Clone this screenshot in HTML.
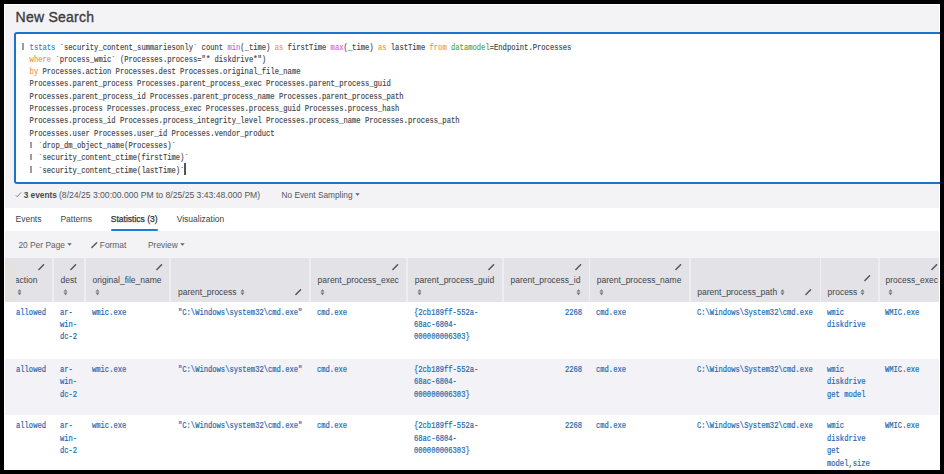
<!DOCTYPE html><html><head><meta charset="utf-8"><style>
html,body{margin:0;padding:0;}
body{width:944px;height:474px;background:#000;position:relative;overflow:hidden;font-family:"Liberation Sans",sans-serif;}
.a{position:absolute;white-space:pre;}
#frame{position:absolute;left:4px;top:4px;width:936px;height:466px;background:#fff;overflow:hidden;}
#title{left:15.6px;top:8.9px;font-size:14px;letter-spacing:0.24px;font-weight:400;-webkit-text-stroke:0.35px #3d3d3f;color:#3d3d3f;}
#box{position:absolute;left:14px;top:32px;width:960px;height:148px;border:2px solid #1b74cc;border-radius:3px;background:#fff;}
#code{position:absolute;left:4.9px;top:7.5px;font-family:"Liberation Mono",monospace;font-size:8.3px;line-height:12.32px;color:#404347;-webkit-text-stroke-width:0.15px;white-space:pre;transform:scaleX(0.8635);transform-origin:0 0;}
.cm{color:#2e80e4}.kw{color:#f29642}.fn{color:#d95ad9}.ar{color:#5e9f3a}.pp{color:transparent}
.st{font-size:8.3px;color:#51565c;}
.tab{font-size:8.5px;color:#3c444d;}
.tb{font-size:8.4px;color:#5a6066;}
.hcol{position:absolute;top:258px;height:44px;background:#e3e3e7;}
.hd{position:absolute;font-size:8.5px;color:#3c444d;white-space:pre;}
.cell{position:absolute;font-family:"Liberation Mono",monospace;font-size:8.5px;line-height:12.4px;color:#1d6ab2;-webkit-text-stroke-width:0.2px;white-space:pre;transform:scaleX(0.8402);transform-origin:0 0;}
.ic{position:absolute;}
</style></head><body>
<div id="frame"></div>
<div class="a" style="left:5px;top:5px;width:934px;height:203px;background:#f3f2f5"></div>
<div id="title" class="a">New Search</div>
<div class="a" style="left:22.2px;top:43.2px;width:1.5px;height:6.4px;background:#9a9da1;z-index:3"></div>
<div class="a" style="left:30.4px;top:141.8px;width:1.5px;height:6.4px;background:#9a9da1;z-index:3"></div>
<div class="a" style="left:30.4px;top:154.1px;width:1.5px;height:6.4px;background:#9a9da1;z-index:3"></div>
<div class="a" style="left:30.4px;top:166.4px;width:1.5px;height:6.4px;background:#9a9da1;z-index:3"></div>
<div class="a" style="left:184.3px;top:162.7px;width:1.8px;height:12px;background:#555;z-index:3"></div>
<div id="box"><div id="code"><span class="pp">|</span> <span class="cm">tstats</span> `security_content_summariesonly` count <span class="fn">min</span>(_time) <span class="kw">as</span> firstTime <span class="fn">max</span>(_time) <span class="kw">as</span> lastTime <span class="kw">from</span> <span class="ar">datamodel</span>=Endpoint.Processes
  <span class="kw">where</span> `process_wmic` (Processes.process="* diskdrive*")
  <span class="kw">by</span> Processes.action Processes.dest Processes.original_file_name
  Processes.parent_process Processes.parent_process_exec Processes.parent_process_guid
  Processes.parent_process_id Processes.parent_process_name Processes.parent_process_path
  Processes.process Processes.process_exec Processes.process_guid Processes.process_hash
  Processes.process_id Processes.process_integrity_level Processes.process_name Processes.process_path
  Processes.user Processes.user_id Processes.vendor_product
  <span class="pp">|</span> `drop_dm_object_name(Processes)`
  <span class="pp">|</span> `security_content_ctime(firstTime)`
  <span class="pp">|</span> `security_content_ctime(lastTime)`</div></div>
<svg class="ic" style="left:15px;top:191px" width="7" height="7" viewBox="0 0 7 7"><path d="M1.1 4.6L2.2 5.7L5.8 1.7" stroke="#777c82" stroke-width="0.95" fill="none" stroke-linecap="round" stroke-linejoin="round"/></svg>
<div class="a st" style="left:23.7px;top:184.5px;height:20px;line-height:20px;"><span style="font-weight:700;color:#454a50">3 events</span></div>
<div class="a st" style="left:59px;top:184.5px;height:20px;line-height:20px;"><span style="font-size:8.6px">(8/24/25 3:00:00.000 PM to 8/25/25 3:43:48.000 PM)</span></div>
<div class="a st" style="left:281.5px;top:184.5px;height:20px;line-height:20px;">No Event Sampling</div>
<div class="a tab" style="left:15.5px;top:214px">Events</div>
<div class="a tab" style="left:60.4px;top:214px">Patterns</div>
<div class="a tab" style="left:110.8px;top:214px;-webkit-text-stroke-width:0.25px;color:#2f353b">Statistics (3)</div>
<div class="a tab" style="left:176.7px;top:214px">Visualization</div>
<div class="a" style="left:111px;top:229px;width:47px;height:2px;background:#1a7cdc;border-radius:1px"></div>
<div class="a" style="left:5px;top:231px;width:934px;height:27px;background:#f3f2f5"></div>
<div class="a tb" style="left:18.4px;top:239.6px">20 Per Page</div>
<div class="a tb" style="left:99.8px;top:239.6px">Format</div>
<div class="a tb" style="left:148px;top:239.6px">Preview</div>
<svg class="ic" style="left:66.8px;top:242.6px" width="5" height="3" viewBox="0 0 5 3"><path d="M0.3 0.2H4.7L2.5 2.8Z" fill="#5c6167"/></svg>
<svg class="ic" style="left:179.5px;top:242.5px" width="5" height="3" viewBox="0 0 5 3"><path d="M0.3 0.2H4.7L2.5 2.8Z" fill="#5c6167"/></svg>
<svg class="ic" style="left:355px;top:193px" width="5" height="3" viewBox="0 0 5 3"><path d="M0.3 0.2H4.7L2.5 2.8Z" fill="#5c6167"/></svg>
<svg class="ic" style="left:91px;top:241.7px" width="7" height="7" viewBox="0 0 7 7"><path d="M0.9 5.5L5.6 0.8" stroke="#555d66" stroke-width="1.5" stroke-linecap="round" fill="none"/></svg>
<div class="a" style="left:5px;top:258px;width:934px;height:44px;background:#eeeef1"></div>
<div class="hcol" style="left:16px;width:36px"></div>
<div class="hcol" style="left:54px;width:30px"></div>
<div class="hcol" style="left:86px;width:83px"></div>
<div class="hcol" style="left:171px;width:138px"></div>
<div class="hcol" style="left:310.5px;width:95.5px"></div>
<div class="hcol" style="left:407.5px;width:94.5px"></div>
<div class="hcol" style="left:503.5px;width:85.0px"></div>
<div class="hcol" style="left:590px;width:99px"></div>
<div class="hcol" style="left:690.5px;width:129.0px"></div>
<div class="hcol" style="left:821px;width:57px"></div>
<div class="hcol" style="left:879.5px;width:59.5px"></div>
<div class="hd" style="left:14.8px;top:275px">action</div>
<svg class="ic" style="left:38px;top:263.5px" width="7" height="7" viewBox="0 0 7 7"><path d="M0.9 5.5L5.6 0.8" stroke="#52565c" stroke-width="1.5" stroke-linecap="round" fill="none"/></svg>
<svg class="ic" style="left:17.3px;top:288.9px" width="5" height="7" viewBox="0 0 5 7"><path d="M0.7 2.5L0.7 3.9L4.3 3.9L4.3 2.5Z" fill="#72767c" opacity="0.35"/><path d="M0.6 2.6L2.5 0.2L4.4 2.6Z M0.6 3.8L2.5 6.2L4.4 3.8Z" fill="#72767c"/></svg>
<div class="hd" style="left:60.5px;top:275px">dest</div>
<svg class="ic" style="left:70px;top:263.5px" width="7" height="7" viewBox="0 0 7 7"><path d="M0.9 5.5L5.6 0.8" stroke="#52565c" stroke-width="1.5" stroke-linecap="round" fill="none"/></svg>
<svg class="ic" style="left:63.0px;top:288.9px" width="5" height="7" viewBox="0 0 5 7"><path d="M0.7 2.5L0.7 3.9L4.3 3.9L4.3 2.5Z" fill="#72767c" opacity="0.35"/><path d="M0.6 2.6L2.5 0.2L4.4 2.6Z M0.6 3.8L2.5 6.2L4.4 3.8Z" fill="#72767c"/></svg>
<div class="hd" style="left:92.5px;top:275px">original_file_name</div>
<svg class="ic" style="left:156px;top:263.5px" width="7" height="7" viewBox="0 0 7 7"><path d="M0.9 5.5L5.6 0.8" stroke="#52565c" stroke-width="1.5" stroke-linecap="round" fill="none"/></svg>
<svg class="ic" style="left:95.0px;top:288.9px" width="5" height="7" viewBox="0 0 5 7"><path d="M0.7 2.5L0.7 3.9L4.3 3.9L4.3 2.5Z" fill="#72767c" opacity="0.35"/><path d="M0.6 2.6L2.5 0.2L4.4 2.6Z M0.6 3.8L2.5 6.2L4.4 3.8Z" fill="#72767c"/></svg>
<div class="hd" style="left:178px;top:286.8px">parent_process</div>
<svg class="ic" style="left:239.7px;top:288.6px" width="5" height="7" viewBox="0 0 5 7"><path d="M0.7 2.5L0.7 3.9L4.3 3.9L4.3 2.5Z" fill="#72767c" opacity="0.35"/><path d="M0.6 2.6L2.5 0.2L4.4 2.6Z M0.6 3.8L2.5 6.2L4.4 3.8Z" fill="#72767c"/></svg>
<svg class="ic" style="left:294.8px;top:289px" width="7" height="7" viewBox="0 0 7 7"><path d="M0.9 5.5L5.6 0.8" stroke="#52565c" stroke-width="1.5" stroke-linecap="round" fill="none"/></svg>
<div class="hd" style="left:317.6px;top:275px">parent_process_exec</div>
<svg class="ic" style="left:392px;top:263.5px" width="7" height="7" viewBox="0 0 7 7"><path d="M0.9 5.5L5.6 0.8" stroke="#52565c" stroke-width="1.5" stroke-linecap="round" fill="none"/></svg>
<svg class="ic" style="left:320.1px;top:288.9px" width="5" height="7" viewBox="0 0 5 7"><path d="M0.7 2.5L0.7 3.9L4.3 3.9L4.3 2.5Z" fill="#72767c" opacity="0.35"/><path d="M0.6 2.6L2.5 0.2L4.4 2.6Z M0.6 3.8L2.5 6.2L4.4 3.8Z" fill="#72767c"/></svg>
<div class="hd" style="left:414.8px;top:275px">parent_process_guid</div>
<svg class="ic" style="left:488px;top:263.5px" width="7" height="7" viewBox="0 0 7 7"><path d="M0.9 5.5L5.6 0.8" stroke="#52565c" stroke-width="1.5" stroke-linecap="round" fill="none"/></svg>
<svg class="ic" style="left:417.3px;top:288.9px" width="5" height="7" viewBox="0 0 5 7"><path d="M0.7 2.5L0.7 3.9L4.3 3.9L4.3 2.5Z" fill="#72767c" opacity="0.35"/><path d="M0.6 2.6L2.5 0.2L4.4 2.6Z M0.6 3.8L2.5 6.2L4.4 3.8Z" fill="#72767c"/></svg>
<div class="hd" style="left:510.5px;top:275px">parent_process_id</div>
<svg class="ic" style="left:575px;top:263.5px" width="7" height="7" viewBox="0 0 7 7"><path d="M0.9 5.5L5.6 0.8" stroke="#52565c" stroke-width="1.5" stroke-linecap="round" fill="none"/></svg>
<svg class="ic" style="left:576.0px;top:288.9px" width="5" height="7" viewBox="0 0 5 7"><path d="M0.7 2.5L0.7 3.9L4.3 3.9L4.3 2.5Z" fill="#72767c" opacity="0.35"/><path d="M0.6 2.6L2.5 0.2L4.4 2.6Z M0.6 3.8L2.5 6.2L4.4 3.8Z" fill="#72767c"/></svg>
<div class="hd" style="left:596.8px;top:275px">parent_process_name</div>
<svg class="ic" style="left:675px;top:263.5px" width="7" height="7" viewBox="0 0 7 7"><path d="M0.9 5.5L5.6 0.8" stroke="#52565c" stroke-width="1.5" stroke-linecap="round" fill="none"/></svg>
<svg class="ic" style="left:599.3px;top:288.9px" width="5" height="7" viewBox="0 0 5 7"><path d="M0.7 2.5L0.7 3.9L4.3 3.9L4.3 2.5Z" fill="#72767c" opacity="0.35"/><path d="M0.6 2.6L2.5 0.2L4.4 2.6Z M0.6 3.8L2.5 6.2L4.4 3.8Z" fill="#72767c"/></svg>
<div class="hd" style="left:697.3px;top:286.8px">parent_process_path</div>
<svg class="ic" style="left:780.3px;top:288.6px" width="5" height="7" viewBox="0 0 5 7"><path d="M0.7 2.5L0.7 3.9L4.3 3.9L4.3 2.5Z" fill="#72767c" opacity="0.35"/><path d="M0.6 2.6L2.5 0.2L4.4 2.6Z M0.6 3.8L2.5 6.2L4.4 3.8Z" fill="#72767c"/></svg>
<svg class="ic" style="left:805px;top:289px" width="7" height="7" viewBox="0 0 7 7"><path d="M0.9 5.5L5.6 0.8" stroke="#52565c" stroke-width="1.5" stroke-linecap="round" fill="none"/></svg>
<div class="hd" style="left:827.6px;top:286.8px">process</div>
<svg class="ic" style="left:860.1px;top:288.6px" width="5" height="7" viewBox="0 0 5 7"><path d="M0.7 2.5L0.7 3.9L4.3 3.9L4.3 2.5Z" fill="#72767c" opacity="0.35"/><path d="M0.6 2.6L2.5 0.2L4.4 2.6Z M0.6 3.8L2.5 6.2L4.4 3.8Z" fill="#72767c"/></svg>
<svg class="ic" style="left:864px;top:274.5px" width="7" height="7" viewBox="0 0 7 7"><path d="M0.9 5.5L5.6 0.8" stroke="#52565c" stroke-width="1.5" stroke-linecap="round" fill="none"/></svg>
<div class="hd" style="left:885.5px;top:275px">process_exec</div>
<svg class="ic" style="left:931px;top:263.5px" width="7" height="7" viewBox="0 0 7 7"><path d="M0.9 5.5L5.6 0.8" stroke="#52565c" stroke-width="1.5" stroke-linecap="round" fill="none"/></svg>
<svg class="ic" style="left:888.0px;top:288.9px" width="5" height="7" viewBox="0 0 5 7"><path d="M0.7 2.5L0.7 3.9L4.3 3.9L4.3 2.5Z" fill="#72767c" opacity="0.35"/><path d="M0.6 2.6L2.5 0.2L4.4 2.6Z M0.6 3.8L2.5 6.2L4.4 3.8Z" fill="#72767c"/></svg>
<div class="a" style="left:5px;top:258px;width:11px;height:44px;background:#e4e1e1"></div>
<div class="a" style="left:5px;top:359px;width:934px;height:56px;background:#f3f2f6"></div>
<div class="cell" style="left:15.7px;top:306.5px">allowed</div>
<div class="cell" style="left:60.2px;top:306.5px">ar-
win-
dc-2</div>
<div class="cell" style="left:92.3px;top:306.5px">wmic.exe</div>
<div class="cell" style="left:177.6px;top:306.5px">&quot;C:\Windows\system32\cmd.exe&quot;</div>
<div class="cell" style="left:317.1px;top:306.5px">cmd.exe</div>
<div class="cell" style="left:413.9px;top:306.5px">{2cb189ff-552a-
68ac-6804-
000000006303}</div>
<div class="cell" style="left:564.7px;top:306.5px">2268</div>
<div class="cell" style="left:596.1px;top:306.5px">cmd.exe</div>
<div class="cell" style="left:696.6px;top:306.5px">C:\Windows\System32\cmd.exe</div>
<div class="cell" style="left:827.4px;top:306.5px">wmic
diskdrive</div>
<div class="cell" style="left:885.4px;top:306.5px">WMIC.exe</div>
<div class="cell" style="left:15.7px;top:363.8px">allowed</div>
<div class="cell" style="left:60.2px;top:363.8px">ar-
win-
dc-2</div>
<div class="cell" style="left:92.3px;top:363.8px">wmic.exe</div>
<div class="cell" style="left:177.6px;top:363.8px">&quot;C:\Windows\system32\cmd.exe&quot;</div>
<div class="cell" style="left:317.1px;top:363.8px">cmd.exe</div>
<div class="cell" style="left:413.9px;top:363.8px">{2cb189ff-552a-
68ac-6804-
000000006303}</div>
<div class="cell" style="left:564.7px;top:363.8px">2268</div>
<div class="cell" style="left:596.1px;top:363.8px">cmd.exe</div>
<div class="cell" style="left:696.6px;top:363.8px">C:\Windows\System32\cmd.exe</div>
<div class="cell" style="left:827.4px;top:363.8px">wmic
diskdrive
get model</div>
<div class="cell" style="left:885.4px;top:363.8px">WMIC.exe</div>
<div class="cell" style="left:15.7px;top:420.3px">allowed</div>
<div class="cell" style="left:60.2px;top:420.3px">ar-
win-
dc-2</div>
<div class="cell" style="left:92.3px;top:420.3px">wmic.exe</div>
<div class="cell" style="left:177.6px;top:420.3px">&quot;C:\Windows\system32\cmd.exe&quot;</div>
<div class="cell" style="left:317.1px;top:420.3px">cmd.exe</div>
<div class="cell" style="left:413.9px;top:420.3px">{2cb189ff-552a-
68ac-6804-
000000006303}</div>
<div class="cell" style="left:564.7px;top:420.3px">2268</div>
<div class="cell" style="left:596.1px;top:420.3px">cmd.exe</div>
<div class="cell" style="left:696.6px;top:420.3px">C:\Windows\System32\cmd.exe</div>
<div class="cell" style="left:827.4px;top:420.3px">wmic
diskdrive
get
model,size</div>
<div class="cell" style="left:885.4px;top:420.3px">WMIC.exe</div>
<div class="a" style="left:0;top:0;width:944px;height:4px;background:#000"></div>
<div class="a" style="left:0;top:470px;width:944px;height:4px;background:#000"></div>
<div class="a" style="left:0;top:0;width:4px;height:474px;background:#000"></div>
<div class="a" style="left:940px;top:0;width:4px;height:474px;background:#000"></div>
</body></html>
